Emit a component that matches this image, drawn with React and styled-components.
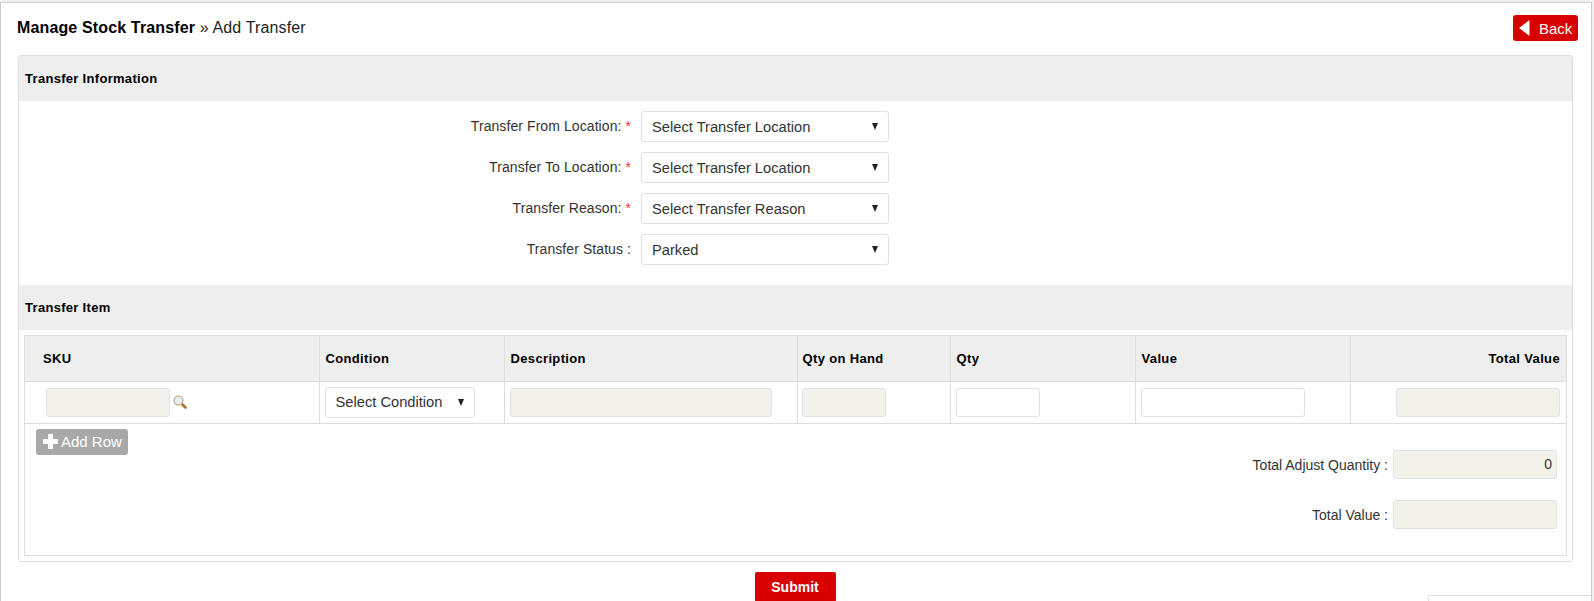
import styled, { createGlobalStyle } from "styled-components";

const GlobalStyle = createGlobalStyle`
    html, body {
        margin: 0;
        height: 601px;
        overflow: hidden;
        background: #f1f1f1;
        font-family: "Liberation Sans", Arial, sans-serif;
        font-size: 14px;
        color: #333;
    }
`;

const Frame = styled.div`
    position: relative;
    box-sizing: border-box;
    width: 1592px;
    height: 599px;
    margin-top: 2px;
    border: 1px solid #ccc;
    border-bottom: 0;
    background: #fff;
    overflow: hidden;
`;

const TitleBar = styled.div`
    display: flex;
    justify-content: space-between;
    align-items: flex-start;
    height: 52px;
    padding: 12px 13px 0 16px;
    box-sizing: border-box;
`;

const Title = styled.h1`
    margin: 1px 0 0;
    font-size: 16px;
    font-weight: 400;
    line-height: 24px;
    letter-spacing: 0.14px;
    color: #222;

    strong {
        color: #000;
    }
`;

const BackButton = styled.button`
    display: flex;
    align-items: center;
    gap: 9px;
    width: 65px;
    height: 26px;
    padding: 0 0 0 6px;
    border: 0;
    border-radius: 3px;
    background: #d90000;
    color: #fff;
    font-family: inherit;
    font-size: 15px;
`;

const Panel = styled.div`
    width: 1555px;
    margin-left: 17px;
    box-sizing: border-box;
    border: 1px solid #ddd;
    border-radius: 3px;
`;

const SectionHeader = styled.div`
    display: flex;
    align-items: center;
    height: 45px;
    padding-left: 6px;
    background: #eee;
    color: #000;
    font-size: 13px;
    font-weight: 700;
    letter-spacing: 0.3px;
`;

const Form = styled.div`
    display: flex;
    flex-direction: column;
    gap: 10px;
    padding: 10px 0 20px;
`;

const FormRow = styled.div`
    display: grid;
    grid-template-columns: 612px 248px;
    column-gap: 10px;
    align-items: center;
`;

const Label = styled.label`
    text-align: right;
    font-size: 14px;
    line-height: 28px;
    letter-spacing: 0.08px;
    margin-top: -2px;

    span {
        color: #e33;
    }
`;

const SelectWrap = styled.div`
    position: relative;
    width: ${(p) => p.$width || "248px"};
    height: 31px;

    &::after {
        content: "";
        position: absolute;
        top: 12px;
        right: 11px;
        border-left: 3.5px solid transparent;
        border-right: 3.5px solid transparent;
        border-top: 7px solid #222;
        pointer-events: none;
    }
`;

const Select = styled.select`
    appearance: none;
    display: block;
    width: 100%;
    height: 100%;
    box-sizing: border-box;
    padding: 0 10px;
    border: 1px solid #dde1e8;
    border-radius: 3px;
    background: #fff;
    color: #333;
    font-family: inherit;
    font-size: 14.7px;
`;

const ItemBox = styled.div`
    margin: 5px;
    height: 221px;
    box-sizing: border-box;
    border: 1px solid #ddd;
`;

const ItemTable = styled.table`
    width: 1541px;
    border-collapse: collapse;
    table-layout: fixed;
`;

const HeadCell = styled.th`
    height: 45px;
    padding: 0 ${(p) => p.$trail || "5px"} 0 ${(p) => p.$indent || "6px"};
    box-sizing: border-box;
    border: 1px solid #ddd;
    border-top: 0;
    background: #eee;
    color: #000;
    font-size: 13px;
    font-weight: 700;
    letter-spacing: 0.35px;
    text-align: ${(p) => p.$align || "left"};

    &:first-child {
        border-left: 0;
    }

    &:last-child {
        border-right: 0;
    }
`;

const Cell = styled.td`
    height: 42px;
    padding: 0 5px;
    box-sizing: border-box;
    border: 1px solid #ddd;

    &:first-child {
        border-left: 0;
    }

    &:last-child {
        border-right: 0;
    }
`;

const SkuWrap = styled.div`
    display: flex;
    align-items: center;
    gap: 3px;
    padding-left: 16px;
`;

const Input = styled.input`
    display: block;
    width: ${(p) => p.$width};
    height: 29px;
    box-sizing: border-box;
    margin-left: ${(p) => p.$offset || 0};
    padding: 0 4px;
    border: 1px solid #dde1e8;
    border-radius: 3px;
    background: ${(p) => (p.readOnly ? "#f2f1ea" : "#fff")};
    color: #333;
    font-family: inherit;
    font-size: 14px;
    text-align: ${(p) => p.$align || "left"};
`;

const ItemFooter = styled.div`
    display: flex;
    justify-content: space-between;
    align-items: flex-start;
`;

const AddRowButton = styled.button`
    display: flex;
    align-items: center;
    gap: 3px;
    width: 92px;
    height: 26px;
    margin: 5px 0 0 11px;
    padding: 0 0 0 7px;
    border: 0;
    border-radius: 3px;
    background: #a8a8a8;
    color: #fff;
    font-family: inherit;
    font-size: 15px;
`;

const Totals = styled.div`
    display: flex;
    flex-direction: column;
    gap: 21px;
    padding: 26px 9px 0 0;
`;

const TotalRow = styled.div`
    display: flex;
    justify-content: flex-end;
    align-items: center;
    gap: 5px;
    font-size: 14px;
`;

const TotalLabel = styled.span`
    margin-top: 2px;
`;

const SubmitRow = styled.div`
    display: flex;
    justify-content: center;
    margin: 10px 2px 0 0;
`;

const SubmitButton = styled.button`
    width: 81px;
    height: 30px;
    border: 0;
    border-radius: 2px;
    background: #d90000;
    color: #fff;
    font-family: inherit;
    font-size: 14px;
    font-weight: 700;
`;

const CornerBox = styled.div`
    position: absolute;
    right: 0;
    bottom: 0;
    width: 162px;
    height: 5px;
    border-top: 1px solid #ddd;
    border-left: 1px solid #ddd;
    background: #fff;
`;

function BackIcon() {
    return (
        <svg width="11" height="16" viewBox="0 0 11 16">
            <path d="M10.5 0v16L0 8z" fill="#fff" />
        </svg>
    );
}

function PlusIcon() {
    return (
        <svg width="15" height="15" viewBox="0 0 15 15">
            <path d="M5 0h5v5h5v5h-5v5H5v-5H0V5h5z" fill="#fff" />
        </svg>
    );
}

function SearchIcon() {
    return (
        <svg width="14" height="14" viewBox="0 0 14 14">
            <path d="M8.5 8.5l4 4" stroke="#b0722a" strokeWidth="2.6" strokeLinecap="round" />
            <circle cx="5.5" cy="5.5" r="4.4" fill="#e4eef2" stroke="#c9b48a" strokeWidth="1.5" />
        </svg>
    );
}

const formRows = [
    { label: "Transfer From Location:", value: "Select Transfer Location", required: true },
    { label: "Transfer To Location:", value: "Select Transfer Location", required: true },
    { label: "Transfer Reason:", value: "Select Transfer Reason", required: true },
    { label: "Transfer Status :", value: "Parked" },
];

function App() {
    return (
        <Frame>
            <GlobalStyle />
            <TitleBar>
                <Title>
                    <strong>Manage Stock Transfer</strong> » Add Transfer
                </Title>
                <BackButton>
                    <BackIcon />
                    Back
                </BackButton>
            </TitleBar>
            <Panel>
                <SectionHeader>Transfer Information</SectionHeader>
                <Form>
                    {formRows.map((row) => (
                        <FormRow key={row.label}>
                            <Label>
                                {row.label}
                                {row.required && <span> *</span>}
                            </Label>
                            <SelectWrap>
                                <Select defaultValue={row.value}>
                                    <option>{row.value}</option>
                                </Select>
                            </SelectWrap>
                        </FormRow>
                    ))}
                </Form>
                <SectionHeader>Transfer Item</SectionHeader>
                <ItemBox>
                    <ItemTable>
                        <colgroup>
                            <col width="294" />
                            <col width="185" />
                            <col width="293" />
                            <col width="153" />
                            <col width="185" />
                            <col width="215" />
                            <col width="216" />
                        </colgroup>
                        <thead>
                            <tr>
                                <HeadCell $indent="18px">SKU</HeadCell>
                                <HeadCell>Condition</HeadCell>
                                <HeadCell>Description</HeadCell>
                                <HeadCell $indent="5px">Qty on Hand</HeadCell>
                                <HeadCell>Qty</HeadCell>
                                <HeadCell>Value</HeadCell>
                                <HeadCell $align="right" $trail="6px">Total Value</HeadCell>
                            </tr>
                        </thead>
                        <tbody>
                            <tr>
                                <Cell>
                                    <SkuWrap>
                                        <Input readOnly $width="124px" />
                                        <SearchIcon />
                                    </SkuWrap>
                                </Cell>
                                <Cell>
                                    <SelectWrap $width="150px">
                                        <Select defaultValue="Select Condition">
                                            <option>Select Condition</option>
                                        </Select>
                                    </SelectWrap>
                                </Cell>
                                <Cell>
                                    <Input readOnly $width="262px" />
                                </Cell>
                                <Cell>
                                    <Input readOnly $width="84px" $offset="-1px" />
                                </Cell>
                                <Cell>
                                    <Input $width="84px" />
                                </Cell>
                                <Cell>
                                    <Input $width="164px" />
                                </Cell>
                                <Cell>
                                    <Input readOnly $width="164px" $offset="40px" />
                                </Cell>
                            </tr>
                        </tbody>
                    </ItemTable>
                    <ItemFooter>
                        <AddRowButton>
                            <PlusIcon />
                            Add Row
                        </AddRowButton>
                        <Totals>
                            <TotalRow>
                                <TotalLabel>Total Adjust Quantity :</TotalLabel>
                                <Input readOnly $width="164px" $align="right" value="0" />
                            </TotalRow>
                            <TotalRow>
                                <TotalLabel>Total Value :</TotalLabel>
                                <Input readOnly $width="164px" />
                            </TotalRow>
                        </Totals>
                    </ItemFooter>
                </ItemBox>
            </Panel>
            <SubmitRow>
                <SubmitButton>Submit</SubmitButton>
            </SubmitRow>
            <CornerBox />
        </Frame>
    );
}

export default App;
